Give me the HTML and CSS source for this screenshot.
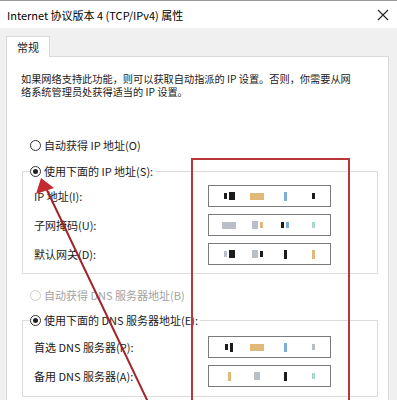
FILE: index.html
```html
<!DOCTYPE html>
<html lang="zh-CN">
<head>
    <meta charset="UTF-8">
    <title>Internet 协议版本 4 (TCP/IPv4) 属性</title>
    <link rel="stylesheet" href="styles.css">
</head>
<body>
    <div class="window">
        <div class="titlebar">
            <span class="title">Internet 协议版本 4 (TCP/IPv4) 属性</span>
            <svg class="close" width="12" height="12" viewBox="0 0 12 12">
                <path d="M1 1 L11 11 M11 1 L1 11" stroke="#222" stroke-width="1.1" fill="none"/>
            </svg>
        </div>

        <div class="client">
            <div class="tabs">
                <div class="tab">常规</div>
            </div>
            <div class="panel">
                <div class="intro">
                    <span class="intro-line">如果网络支持此功能，则可以获取自动指派的 IP 设置。否则，你需要从网</span>
                    <span class="intro-line">络系统管理员处获得适当的 IP 设置。</span>
                </div>

                <div class="radio-row first">
                    <span class="radio"></span>
                    <span>自动获得 IP 地址(O)</span>
                </div>

                <fieldset class="group">
                    <legend class="radio-row">
                        <span class="radio checked"></span>
                        <span>使用下面的 IP 地址(S):</span>
                    </legend>
                    <div class="field-row">
                        <label>IP 地址(I):</label>
                        <div class="ipbox">
                            <span class="oct"><i class="px k s"></i><i class="px k"></i></span><span class="oct"><i class="px y w"></i></span><span class="oct"><i class="px b t"></i></span><span class="oct"><i class="px k s"></i></span>
                        </div>
                    </div>
                    <div class="field-row">
                        <label>子网掩码(U):</label>
                        <div class="ipbox">
                            <span class="oct"><i class="px g w"></i></span><span class="oct"><i class="px g"></i><i class="px y s"></i></span><span class="oct"><i class="px k s"></i><i class="px b s"></i></span><span class="oct"><i class="px c s"></i></span>
                        </div>
                    </div>
                    <div class="field-row">
                        <label>默认网关(D):</label>
                        <div class="ipbox">
                            <span class="oct"><i class="px g s"></i><i class="px k"></i></span><span class="oct"><i class="px g"></i><i class="px k s"></i></span><span class="oct"><i class="px k t"></i></span><span class="oct"><i class="px y t"></i></span>
                        </div>
                    </div>
                </fieldset>

                <div class="radio-row disabled">
                    <span class="radio"></span>
                    <span>自动获得 DNS 服务器地址(B)</span>
                </div>

                <fieldset class="group dns">
                    <legend class="radio-row">
                        <span class="radio checked"></span>
                        <span>使用下面的 DNS 服务器地址(E):</span>
                    </legend>
                    <div class="field-row">
                        <label>首选 DNS 服务器(P):</label>
                        <div class="ipbox">
                            <span class="oct"><i class="px k s"></i><i class="px k t"></i></span><span class="oct"><i class="px y w"></i></span><span class="oct"><i class="px b t"></i></span><span class="oct"><i class="px g s"></i></span>
                        </div>
                    </div>
                    <div class="field-row">
                        <label>备用 DNS 服务器(A):</label>
                        <div class="ipbox">
                            <span class="oct"><i class="px y t"></i></span><span class="oct"><i class="px g"></i></span><span class="oct"><i class="px k t"></i></span><span class="oct"><i class="px c s"></i></span>
                        </div>
                    </div>
                </fieldset>
            </div>
        </div>

        <!-- annotation drawn over the screenshot -->
        <div class="highlight"></div>
        <svg class="arrow" width="397" height="400" viewBox="0 0 397 400">
            <line x1="148" y1="402" x2="45" y2="186" stroke="#a3232b" stroke-width="2"/>
            <polygon points="41,178 36,194 54,188" fill="#c42a32"/>
        </svg>
    </div>
</body>
</html>
```

FILE: styles.css
```css
body {
    margin: 0;
    font-family: "Noto Sans CJK SC", "Liberation Sans", sans-serif;
    font-size: 11px;
    color: #1a1a1a;
    background: #f0f0f0;
}
.window {
    position: relative;
    width: 397px;
    height: 400px;
    overflow: hidden;
}
.titlebar {
    height: 27px;
    border-top: 1px solid #9a9a9a;
    background: white;
    display: flex;
    align-items: center;
    justify-content: space-between;
    padding: 0 8px 0 7px;
}
.title {
    color: #000;
    font-size: 11px;
}
.client {
    background: #f0f0f0;
    padding: 8px 8px 0 6px;
}
.tabs {
    display: flex;
}
.tab {
    width: 44px;
    height: 21px;
    line-height: 20px;
    text-align: center;
    background: white;
    border: 1px solid #d9d9d9;
    border-bottom: none;
    box-sizing: border-box;
    margin-bottom: -1px;
    position: relative;
}
.panel {
    background: white;
    border: 1px solid #d9d9d9;
    border-bottom: none;
    padding: 0 10px 0 13px;
    height: 360px;
}
.intro {
    display: flex;
    flex-direction: column;
    align-items: flex-start;
    margin: 15px 0 0 1px;
    font-size: 10.2px;
    line-height: 13px;
}
.intro-line {
    height: 13px;
}
.radio-row {
    display: flex;
    align-items: center;
    gap: 3px;
    height: 20px;
    line-height: 20px;
}
.radio-row.first {
    margin: 37px 0 0 10px;
}
.radio-row.disabled {
    margin: 11px 0 0 10px;
    color: #a2a2a2;
}
.radio {
    width: 11px;
    height: 11px;
    border: 1px solid #333;
    border-radius: 50%;
    box-sizing: border-box;
    background: white;
    position: relative;
}
.radio.checked::after {
    content: "";
    position: absolute;
    left: 2px;
    top: 2px;
    width: 5px;
    height: 5px;
    border-radius: 50%;
    background: #222;
}
.disabled .radio {
    border-color: #cfcfcf;
}
.group {
    margin: 6px 0 0 2px;
    padding: 4px 0 8px 11px;
    border: 1px solid #dcdcdc;
}
.group legend {
    padding: 0 2px 0 0;
    margin-left: -4px;
}
.group.dns {
    margin-top: 5px;
    padding-top: 6px;
    padding-bottom: 9px;
}
.field-row {
    display: grid;
    grid-template-columns: 174px 123px;
    align-items: center;
    height: 22px;
    margin-bottom: 7px;
}
.field-row:last-child {
    margin-bottom: 0;
}
.ipbox {
    height: 22px;
    border: 1px solid #7a7a7a;
    box-sizing: border-box;
    display: flex;
    align-items: center;
    padding-left: 6px;
}
.oct {
    width: 28px;
    display: flex;
    align-items: center;
    justify-content: center;
    gap: 2px;
}
.px {
    display: inline-block;
    width: 6px;
    height: 8px;
}
.px.s { width: 3px; height: 6px; }
.px.t { width: 3px; height: 9px; }
.px.w { width: 14px; height: 7px; }
.px.k { background: #1c1c1c; }
.px.y { background: #e0b878; }
.px.b { background: #7eaed6; }
.px.g { background: #b9bfc6; }
.px.c { background: #a9d6d0; }
.highlight {
    position: absolute;
    left: 191px;
    top: 158px;
    width: 155px;
    height: 260px;
    border: 2px solid #b8383a;
}
.arrow {
    position: absolute;
    left: 0;
    top: 0;
    pointer-events: none;
}
```
